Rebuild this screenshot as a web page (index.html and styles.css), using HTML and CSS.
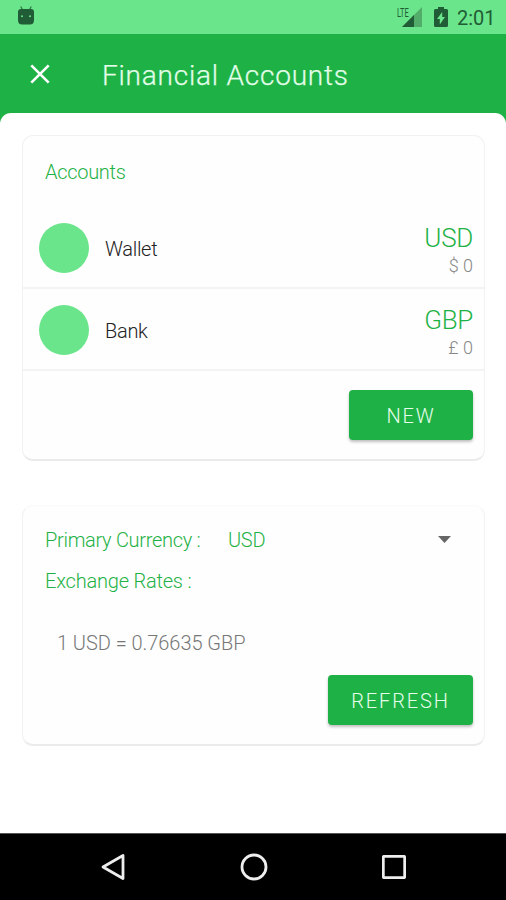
FILE: index.html
```html
<!DOCTYPE html>
<html lang="en">
<head>
<meta charset="utf-8">
<title>Financial Accounts</title>
<link rel="stylesheet" href="styles.css">
</head>
<body>
<div class="status">
  <svg class="droid" width="18" height="20" viewBox="0 0 18 20">
    <path d="M3.800 .5l1.700 3.500M14.200 .5l-1.700 3.500" stroke="#2d7a45" stroke-width="1.300" fill="none"/>
    <path d="M4 3h10q3 0 3 3v8q0 4.500-4 4.500H5q-4 0-4-4.500V6q0-3 3-3z" fill="#205c35"/>
    <circle cx="5" cy="10.300" r="1" fill="#6be58b"/><circle cx="13" cy="10.300" r="1" fill="#6be58b"/>
  </svg>
  <div class="signal">
    <span class="lte">LTE</span>
    <svg width="20" height="20" viewBox="0 0 20 20">
      <path d="M20 0v20H0z" fill="#51ad69"/><path d="M12 8v12H0z" fill="#205c35"/>
    </svg>
  </div>
  <svg class="battery" width="14" height="20" viewBox="0 0 14 20">
    <path d="M4 0h6v2h2.500Q14 2 14 3.500v15q0 1.500-1.500 1.500h-11Q0 20 0 18.500v-15Q0 2 1.500 2H4z" fill="#205c35"/>
    <path d="M8.200 5v5H11l-5.200 7.500V12H3z" fill="#6be58b"/>
  </svg>
  <span class="clock">2:01</span>
</div>
<header class="appbar">
  <svg width="20" height="20" viewBox="0 0 20 20"><path d="M1.300 1.300l17.400 17.400M18.700 1.300L1.300 18.700" stroke="#fff" stroke-width="2.600"/></svg>
  <h1 class="title">Financial Accounts</h1>
</header>
<main class="sheet">
  <section class="card accounts">
    <h2 class="heading">Accounts</h2>
    <div class="row">
      <span class="avatar"></span><span class="name">Wallet</span>
      <div class="amount"><span class="code">USD</span><span class="value">$ 0</span></div>
    </div>
    <div class="row">
      <span class="avatar"></span><span class="name">Bank</span>
      <div class="amount"><span class="code">GBP</span><span class="value">£ 0</span></div>
    </div>
    <div class="actions"><button class="btn new">NEW</button></div>
  </section>
  <section class="card rates">
    <div class="line primary">
      <span class="label">Primary Currency :</span><span class="selected">USD</span>
      <svg class="caret" width="13" height="7" viewBox="0 0 13 7"><path d="M0 0h13L6.500 7z" fill="#666"/></svg>
    </div>
    <div class="line"><span class="exchange">Exchange Rates :</span></div>
    <div class="rate">1 USD = 0.76635 GBP</div>
    <div class="actions"><button class="btn refresh">REFRESH</button></div>
  </section>
</main>
<nav class="nav">
  <svg width="24" height="28" viewBox="0 0 24 28"><path d="M2 14L22 2.500v23z" fill="none" stroke="#eee" stroke-width="2.800" stroke-linejoin="round"/></svg>
  <svg width="28" height="28" viewBox="0 0 28 28"><circle cx="14" cy="14" r="12" fill="none" stroke="#eee" stroke-width="2.800"/></svg>
  <svg width="24" height="24" viewBox="0 0 24 24"><rect x="1.300" y="1.300" width="21.400" height="21.400" rx="1" fill="none" stroke="#eee" stroke-width="2.800"/></svg>
</nav>
</body>
</html>
```
FILE: styles.css
```css
* { box-sizing: border-box; }
body {
  margin: 0;
  width: 506px;
  height: 900px;
  display: flex;
  flex-direction: column;
  background: #1eb246;
  font-family: Roboto, "Liberation Sans", sans-serif;
  font-weight: 300;
  overflow: hidden;
}
svg { display: block; flex: none; }
span, h1, h2 { white-space: nowrap; }
.status {
  height: 34px;
  flex: none;
  display: flex;
  align-items: flex-start;
  background: #6be58b;
  color: #205c35;
}
.droid { margin: 6px 0 0 17px; }
.signal { display: flex; margin: 7px 0 0 auto; padding-right: 12px; }
.lte { width: 5px; font-size: 12px; line-height: 12px; font-weight: 400; transform: scaleX(.62); transform-origin: 0 0; }
.battery { margin-top: 7px; }
.clock { margin: 7px 11px 0 9px; width: 38px; font-size: 20px; line-height: 23px; font-weight: 400; }
.appbar {
  height: 79px;
  flex: none;
  display: flex;
  align-items: center;
  padding-left: 30px;
  background: #1eb246;
}
.title { margin: 4px 0 0 52px; font-size: 28px; line-height: 34px; font-weight: 300; color: #e2fde8; letter-spacing: .78px; -webkit-text-stroke: .25px #e2fde8; }
.sheet {
  height: 720px;
  flex: none;
  padding: 22px 21px 0 22px;
  background: #fff;
  border-radius: 11px 11px 0 0;
}
.card {
  border-radius: 11px;
  background: #fefefe;
  border: 1px solid #f2f2f2;
  border-bottom: 2px solid #ebebeb;
}
.accounts { height: 326px; }
.heading { margin: 0; height: 71px; padding: 25px 0 0 22px; font-size: 20px; line-height: 23px; font-weight: 300; color: #1eb246; letter-spacing: -.3px; }
.row {
  height: 82px;
  display: flex;
  align-items: center;
  padding: 1px 11px 0 16px;
  border-bottom: 2px solid #f3f3f3;
}
.avatar { width: 50px; height: 50px; border-radius: 50%; background: #6be58b; }
.name { margin-left: 16px; margin-top: 3px; font-size: 20px; line-height: 24px; color: #222; letter-spacing: -.3px; }
.amount { margin-left: auto; padding-top: 6px; display: flex; flex-direction: column; align-items: flex-end; }
.code { font-size: 26px; line-height: 30px; color: #1eb246; letter-spacing: -.3px; }
.value { font-size: 18px; line-height: 26px; color: #888; }
.actions { display: flex; justify-content: flex-end; padding-right: 11px; }
.accounts .actions { padding-top: 19px; }
.btn {
  height: 50px;
  padding: 2px 0 0 0;
  border: 0;
  border-radius: 4px;
  background: #1eb246;
  color: #e6fdeb;
  font: 300 20px/24px Roboto, "Liberation Sans", sans-serif;
  letter-spacing: 1.9px;
  box-shadow: 0 2px 3px rgba(0, 0, 0, .25);
}
.new { width: 124px; }
.refresh { width: 145px; }
.rates { margin-top: 44px; height: 241px; padding-top: 13px; border-top-color: #fafafa; }
.line { height: 41px; display: flex; align-items: center; padding-left: 22px; font-size: 20px; line-height: 24px; color: #1eb246; letter-spacing: -.3px; }
.label { width: 183px; }
.exchange { letter-spacing: -.2px; }
.caret { margin: 0 33px 0 auto; }
.rate { height: 74px; padding: 30px 0 0 34px; font-size: 20px; line-height: 24px; color: #777; letter-spacing: -.05px; }
.nav {
  height: 67px;
  flex: none;
  display: flex;
  align-items: center;
  padding-left: 101px;
  background: #000;
  border-top: 1px solid #555;
}
.nav svg:nth-child(2) { margin: 0 114px 0 115px; }
```
